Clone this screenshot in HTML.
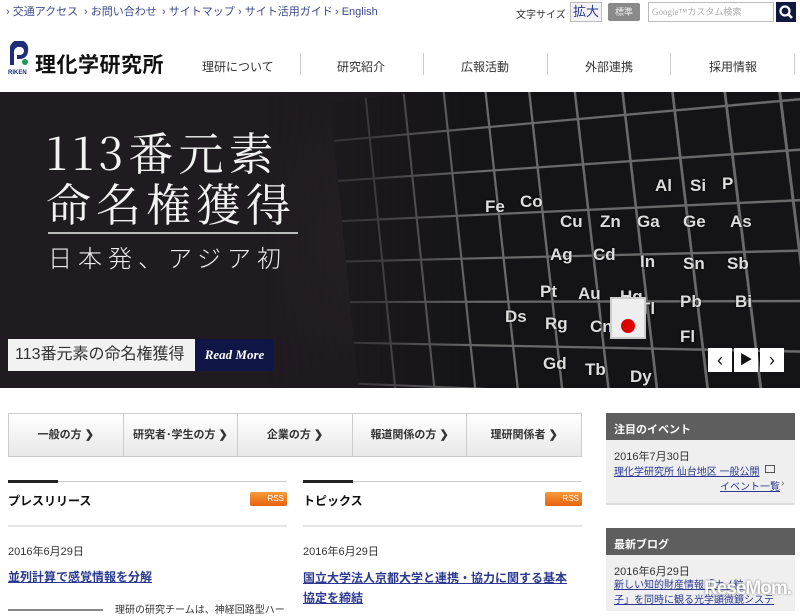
<!DOCTYPE html>
<html><head><meta charset="utf-8">
<style>
*{margin:0;padding:0;box-sizing:border-box}
body{width:800px;height:611px;overflow:hidden;background:#fff;font-family:"Liberation Sans","Noto Sans CJK JP",sans-serif;color:#333;position:relative}
.a{position:absolute;white-space:nowrap}
.tl{font-size:11px;color:#3d4a8c;top:5px;line-height:14px}
.nav{font-size:12px;color:#333;top:58px}
.sep{position:absolute;top:53px;width:1px;height:22px;background:#ccc}
.hero{position:absolute;left:0;top:92px;width:800px;height:296px;background:radial-gradient(ellipse at 20% 50%,#3a3036 0%,#201b20 60%,#121015 100%);overflow:hidden}
.pt{position:absolute;left:330px;top:10px;width:580px;height:340px;transform:perspective(600px) rotateY(-18deg) rotateZ(-6deg);transform-origin:left top;
background:repeating-linear-gradient(90deg,#141416 0 36px,#6a6a6a 36px 38px),#141416}
.pt:after{content:"";position:absolute;inset:0;background:repeating-linear-gradient(180deg,transparent 0 38px,#6a6a6a 38px 40px)}
.sym{position:absolute;color:#ddd;font-weight:bold;font-size:17px;text-shadow:0 0 2px #000}
.aud{position:absolute;top:413px;left:8px;width:574px;height:44px;border:1px solid #ccc;background:linear-gradient(#fff,#e8e8e8);display:flex}
.aud div{flex:1;border-right:1px solid #ccc;font-size:11px;font-weight:bold;text-align:center;line-height:42px;color:#333}
.aud div:last-child{border:none}
.sh{position:absolute;left:606px;width:189px;height:27px;background:#5e5e5e;color:#fff;font-size:11px;font-weight:bold;padding:8px 8px}
.sb{position:absolute;left:606px;width:189px;background:#efefef}
.lk{color:#2b3990;text-decoration:underline}
.rss{position:absolute;width:37px;height:14px;background:linear-gradient(#f59a3a,#e8620e);border-radius:2px;color:#fff;font-size:8px;line-height:14px;text-align:right;padding-right:3px}
</style></head><body>
<div class="a tl" style="left:6px">› 交通アクセス</div>
<div class="a tl" style="left:84px">› お問い合わせ</div>
<div class="a tl" style="left:162px">› サイトマップ</div>
<div class="a tl" style="left:238px">› サイト活用ガイド</div>
<div class="a tl" style="left:335px">› English</div>
<div class="a" style="left:516px;top:6px;font-size:10px">文字サイズ</div>
<div class="a" style="left:570px;top:2px;width:32px;height:20px;border:1px solid #bbb;background:#f4f4f8;color:#2b3990;font-size:13px;text-align:center;line-height:18px">拡大</div>
<div class="a" style="left:608px;top:3px;width:32px;height:18px;background:#8a8a8a;color:#eee;font-size:9px;text-align:center;line-height:18px;border-radius:2px">標準</div>
<div class="a" style="left:648px;top:2px;width:126px;height:20px;border:1px solid #bbb;color:#aaa;font-size:9px;line-height:18px;padding-left:3px;font-family:'Liberation Serif','Noto Sans CJK JP',serif">Google™カスタム検索</div>
<div class="a" style="left:776px;top:2px;width:20px;height:20px;background:#101840"><svg width="20" height="20"><circle cx="9" cy="9" r="4.5" stroke="#fff" stroke-width="2.2" fill="none"/><path d="M12 12l4 4" stroke="#fff" stroke-width="2.6"/></svg></div>
<svg class="a" style="left:7px;top:41px" width="24" height="34"><path d="M3 24V6a9 9 0 0 1 18 4a8 8 0 0 1-8 8h-3v-4h3a4 4 0 0 0 0-8a5 5 0 0 0-6 4v14z" fill="#1d2d78"/><circle cx="18" cy="21" r="3" fill="#1a9a50"/><text x="1" y="33" font-size="6" font-weight="bold" fill="#1d2d78" font-family="Liberation Sans">RIKEN</text></svg>
<div class="a" style="left:35px;top:49px;font-size:21px;font-weight:bold;color:#111;letter-spacing:0.5px">理化学研究所</div>
<div class="a nav" style="left:202px">理研について</div>
<div class="sep" style="left:300px"></div>
<div class="a nav" style="left:337px">研究紹介</div>
<div class="sep" style="left:423px"></div>
<div class="a nav" style="left:461px">広報活動</div>
<div class="sep" style="left:547px"></div>
<div class="a nav" style="left:585px">外部連携</div>
<div class="sep" style="left:670px"></div>
<div class="a nav" style="left:709px">採用情報</div>
<div class="sep" style="left:794px"></div>
<div class="hero">
<div class="pt"></div>
<div style="position:absolute;left:0;top:0;width:480px;height:296px;background:linear-gradient(90deg,rgba(32,27,32,1) 55%,rgba(32,27,32,0.6) 78%,rgba(32,27,32,0))"></div>
<div class="sym" style="left:655px;top:84px">Al</div><div class="sym" style="left:690px;top:84px">Si</div><div class="sym" style="left:722px;top:82px">P</div>
<div class="sym" style="left:485px;top:105px">Fe</div><div class="sym" style="left:520px;top:100px">Co</div><div class="sym" style="left:560px;top:120px">Cu</div><div class="sym" style="left:600px;top:120px">Zn</div><div class="sym" style="left:637px;top:120px">Ga</div><div class="sym" style="left:683px;top:120px">Ge</div><div class="sym" style="left:730px;top:120px">As</div>
<div class="sym" style="left:550px;top:153px">Ag</div><div class="sym" style="left:593px;top:153px">Cd</div><div class="sym" style="left:640px;top:160px">In</div><div class="sym" style="left:683px;top:162px">Sn</div><div class="sym" style="left:727px;top:162px">Sb</div>
<div class="sym" style="left:540px;top:190px">Pt</div><div class="sym" style="left:578px;top:192px">Au</div><div class="sym" style="left:620px;top:195px">Hg</div><div class="sym" style="left:640px;top:207px">Tl</div><div class="sym" style="left:680px;top:200px">Pb</div><div class="sym" style="left:735px;top:200px">Bi</div>
<div class="sym" style="left:505px;top:215px">Ds</div><div class="sym" style="left:545px;top:222px">Rg</div><div class="sym" style="left:590px;top:225px">Cn</div><div class="sym" style="left:680px;top:235px">Fl</div>
<div style="position:absolute;left:610px;top:205px;width:36px;height:42px;background:#eee;border:2px solid #ccc"><div style="width:14px;height:14px;border-radius:50%;background:#d00;margin:20px auto 0"></div></div>
<div class="sym" style="left:543px;top:262px">Gd</div><div class="sym" style="left:585px;top:268px">Tb</div><div class="sym" style="left:630px;top:275px">Dy</div>
<div style="position:absolute;left:46px;top:33px;color:#f2f2f2;font-size:45px;line-height:51px;letter-spacing:5px;font-family:'Noto Serif CJK SC','Liberation Serif',serif">113番元素<br>命名権獲得</div>
<div style="position:absolute;left:48px;top:140px;width:250px;height:2px;background:#bbb"></div>
<div style="position:absolute;left:48px;top:147px;color:#eee;font-size:24px;letter-spacing:6px;font-family:'Noto Sans CJK JP',sans-serif;font-weight:300">日本発、アジア初</div>
<div style="position:absolute;left:8px;top:247px;width:187px;height:32px;background:#f2f2f2;color:#333;font-size:16px;line-height:32px;padding-left:7px">113番元素の命名権獲得</div>
<div style="position:absolute;left:196px;top:247px;width:77px;height:32px;background:#0f1645;color:#fff;font-size:13px;font-weight:bold;font-style:italic;line-height:32px;text-align:center;font-family:'Liberation Serif',serif">Read More</div>
<div style="position:absolute;left:708px;top:256px;width:24px;height:24px;background:#fff;text-align:center;font-size:18px;line-height:24px;color:#111">‹</div>
<div style="position:absolute;left:734px;top:256px;width:24px;height:24px;background:#fff;text-align:center;font-size:13px;line-height:24px;color:#111">▶</div>
<div style="position:absolute;left:760px;top:256px;width:24px;height:24px;background:#fff;text-align:center;font-size:18px;line-height:24px;color:#111">›</div>
</div>
<div class="aud"><div>一般の方 ❯</div><div>研究者･学生の方 ❯</div><div>企業の方 ❯</div><div>報道関係の方 ❯</div><div>理研関係者 ❯</div></div>
<div class="a" style="left:8px;top:481px;width:279px;height:1px;background:#ccc"></div>
<div class="a" style="left:8px;top:480px;width:50px;height:3px;background:#222"></div>
<div class="a" style="left:8px;top:492px;font-size:12px;font-weight:bold;color:#111">プレスリリース</div>
<div class="rss" style="left:250px;top:492px">RSS</div>
<div class="a" style="left:8px;top:525px;width:279px;height:2px;background:#e4e4e4"></div>
<div class="a" style="left:8px;top:543px;font-size:11px">2016年6月29日</div>
<div class="a lk" style="left:8px;top:568px;font-size:12px;font-weight:bold">並列計算で感覚情報を分解</div>
<div class="a" style="left:8px;top:609px;width:95px;height:2px;background:#888"></div>
<div class="a" style="left:115px;top:601px;font-size:10px">理研の研究チームは、神経回路型ハー</div>
<div class="a" style="left:303px;top:481px;width:279px;height:1px;background:#ccc"></div>
<div class="a" style="left:303px;top:480px;width:50px;height:3px;background:#222"></div>
<div class="a" style="left:303px;top:492px;font-size:12px;font-weight:bold;color:#111">トピックス</div>
<div class="rss" style="left:545px;top:492px">RSS</div>
<div class="a" style="left:303px;top:525px;width:279px;height:2px;background:#e4e4e4"></div>
<div class="a" style="left:303px;top:543px;font-size:11px">2016年6月29日</div>
<div class="a lk" style="left:303px;top:568px;font-size:12px;font-weight:bold;line-height:20px">国立大学法人京都大学と連携・協力に関する基本<br>協定を締結</div>
<div class="sh" style="top:413px">注目のイベント</div>
<div class="sb" style="top:440px;height:65px;border-bottom:2px solid #ddd"></div>
<div class="a" style="left:614px;top:448px;font-size:11px">2016年7月30日</div>
<div class="a lk" style="left:614px;top:463px;font-size:10px">理化学研究所 仙台地区 一般公開</div>
<div class="a" style="left:765px;top:465px;width:10px;height:8px;border:1px solid #555"></div>
<div class="a lk" style="left:720px;top:478px;font-size:10px">イベント一覧</div>
<div class="a" style="left:781px;top:478px;font-size:10px;color:#666">›</div>
<div class="sh" style="top:528px">最新ブログ</div>
<div class="sb" style="top:555px;height:56px"></div>
<div class="a" style="left:614px;top:563px;font-size:11px">2016年6月29日</div>
<div class="a lk" style="left:614px;top:578px;font-size:10px;line-height:15px">新しい知的財産情報「ナノ粒<br>子」を同時に観る光学顕微鏡システ</div>
<div class="a" style="left:704px;top:578px;font-size:19px;font-weight:bold;color:#fff;text-shadow:0 0 2px #555;letter-spacing:-1px;opacity:0.9">ReseMom.</div>
</body></html>
